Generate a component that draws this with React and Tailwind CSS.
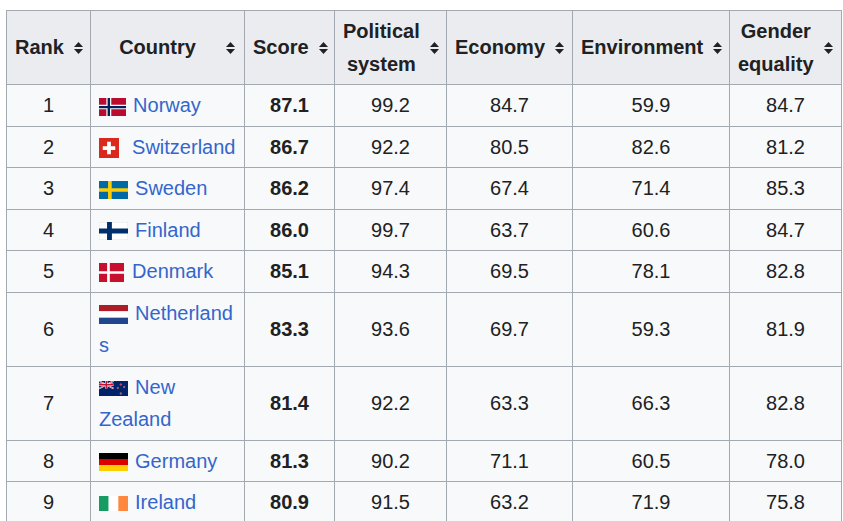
import React from 'react';

const SortIcon = () => (
  <svg width="9" height="12" viewBox="0 0 9 12" className="shrink-0 ml-[10px]">
    <path d="M4.5 0L9 5H0z" fill="#202122" />
    <path d="M0 7h9l-4.5 5z" fill="#202122" />
  </svg>
);

const Norway = () => (
  <svg width="27" height="18" viewBox="0 0 22 16" preserveAspectRatio="none" className="inline-block align-middle mr-[1.5px]">
    <rect width="22" height="16" fill="#ba0c2f" />
    <path d="M6 0h4v16H6zM0 6h22v4H0z" fill="#fff" />
    <path d="M7 0h2v16H7zM0 7h22v2H0z" fill="#00205b" />
  </svg>
);

const Switzerland = () => (
  <svg width="20" height="20" viewBox="0 0 32 32" className="inline-block align-middle mr-[7.5px]">
    <rect width="32" height="32" fill="#da291c" />
    <path d="M13 6h6v7h7v6h-7v7h-6v-7H6v-6h7z" fill="#fff" />
  </svg>
);

const Sweden = () => (
  <svg width="29" height="18" viewBox="0 0 16 10" preserveAspectRatio="none" className="inline-block align-middle mr-[1.5px]">
    <rect width="16" height="10" fill="#006aa7" />
    <path d="M5 0h2v10H5zM0 4h16v2H0z" fill="#fecc02" />
  </svg>
);

const Finland = () => (
  <svg width="29" height="18" viewBox="0 0 18 11" preserveAspectRatio="none" className="inline-block align-middle mr-[1.5px]">
    <rect width="18" height="11" fill="#fff" stroke="#d6d8db" strokeWidth="0.4" />
    <path d="M5 0h3v11H5zM0 4h18v3H0z" fill="#002f6c" />
  </svg>
);

const Denmark = () => (
  <svg width="25" height="19" viewBox="0 0 37 28" preserveAspectRatio="none" className="inline-block align-middle mr-[2.5px]">
    <rect width="37" height="28" fill="#c8102e" />
    <path d="M12 0h4v28h-4zM0 12h37v4H0z" fill="#fff" />
  </svg>
);

const Netherlands = () => (
  <svg width="29" height="19" viewBox="0 0 9 6" preserveAspectRatio="none" className="inline-block align-middle mr-[1.5px]">
    <rect width="9" height="2" fill="#ae1c28" />
    <rect y="2" width="9" height="2" fill="#fff" />
    <rect y="4" width="9" height="2" fill="#21468b" />
  </svg>
);

const NewZealand = () => (
  <svg width="29" height="15" viewBox="0 0 60 30" preserveAspectRatio="none" className="inline-block align-middle mr-[1.5px]">
    <rect width="60" height="30" fill="#012169" />
    <path d="M0 0L30 15M30 0L0 15" stroke="#fff" strokeWidth="3" />
    <path d="M0 0L30 15M30 0L0 15" stroke="#c8102e" strokeWidth="1.2" />
    <path d="M15 0v15M0 7.5h30" stroke="#fff" strokeWidth="5" />
    <path d="M15 0v15M0 7.5h30" stroke="#c8102e" strokeWidth="3" />
    <g fill="#c8102e" stroke="#fff" strokeWidth="0.6">
      <circle cx="45" cy="7" r="1.6" />
      <circle cx="39" cy="14" r="1.6" />
      <circle cx="52" cy="12" r="1.6" />
      <circle cx="45" cy="25" r="1.8" />
    </g>
  </svg>
);

const Germany = () => (
  <svg width="29" height="18" viewBox="0 0 5 3" preserveAspectRatio="none" className="inline-block align-middle mr-[1.5px]">
    <rect width="5" height="1" fill="#000" />
    <rect y="1" width="5" height="1" fill="#dd0000" />
    <rect y="2" width="5" height="1" fill="#ffce00" />
  </svg>
);

const Ireland = () => (
  <svg width="29" height="15" viewBox="0 0 3 2" preserveAspectRatio="none" className="inline-block align-middle mr-[1.5px]">
    <rect width="1" height="2" fill="#169b62" />
    <rect x="1" width="1" height="2" fill="#fff" />
    <rect x="2" width="1" height="2" fill="#ff883e" />
  </svg>
);

const rows = [
  { rank: 1, flag: Norway, country: 'Norway', score: '87.1', pol: '99.2', eco: '84.7', env: '59.9', gen: '84.7' },
  { rank: 2, flag: Switzerland, country: 'Switzerland', score: '86.7', pol: '92.2', eco: '80.5', env: '82.6', gen: '81.2' },
  { rank: 3, flag: Sweden, country: 'Sweden', score: '86.2', pol: '97.4', eco: '67.4', env: '71.4', gen: '85.3' },
  { rank: 4, flag: Finland, country: 'Finland', score: '86.0', pol: '99.7', eco: '63.7', env: '60.6', gen: '84.7' },
  { rank: 5, flag: Denmark, country: 'Denmark', score: '85.1', pol: '94.3', eco: '69.5', env: '78.1', gen: '82.8' },
  { rank: 6, flag: Netherlands, country: 'Netherlands', score: '83.3', pol: '93.6', eco: '69.7', env: '59.3', gen: '81.9' },
  { rank: 7, flag: NewZealand, country: 'New Zealand', score: '81.4', pol: '92.2', eco: '63.3', env: '66.3', gen: '82.8' },
  { rank: 8, flag: Germany, country: 'Germany', score: '81.3', pol: '90.2', eco: '71.1', env: '60.5', gen: '78.0' },
  { rank: 9, flag: Ireland, country: 'Ireland', score: '80.9', pol: '91.5', eco: '63.2', env: '71.9', gen: '75.8' },
];

const headers = ['Rank', 'Country', 'Score', 'Political system', 'Economy', 'Environment', 'Gender equality'];

const App = () => {
  return (
    <div className="bg-white min-h-screen pt-[10px] pl-[6px] font-['Liberation_Sans',Arial,sans-serif] text-[20px] leading-[32.5px] text-[#202122]">
      <table className="table-fixed w-[835px] border-collapse border border-[#a2a9b1] bg-[#f8f9fa]">
        <colgroup>
          <col className="w-[84px]" />
          <col className="w-[154px]" />
          <col className="w-[90px]" />
          <col className="w-[112px]" />
          <col className="w-[126px]" />
          <col className="w-[157px]" />
          <col className="w-[112px]" />
        </colgroup>
        <thead>
          <tr className="h-[74px]">
            {headers.map((h) => (
              <th key={h} className="bg-[#eaecf0] border border-[#a2a9b1] py-1 pl-2 pr-[9px] font-bold align-middle">
                <div className="flex items-center">
                  <span className="flex-1 text-center">{h}</span>
                  <SortIcon />
                </div>
              </th>
            ))}
          </tr>
        </thead>
        <tbody>
          {rows.map((r) => {
            const Flag = r.flag;
            // single-word names break inside the word, like the original page does
            const wrap = r.country.includes(' ') ? 'break-words' : 'break-all';
            return (
              <tr key={r.rank}>
                <td className="border border-[#a2a9b1] py-1 px-2 text-center">{r.rank}</td>
                <td className={`border border-[#a2a9b1] py-1 pl-2 pr-2 text-left ${wrap}`}>
                  <Flag />{'\u00A0'}<a href="#" className="text-[#3366cc]">{r.country}</a>
                </td>
                <td className="border border-[#a2a9b1] py-1 px-2 text-center font-bold">{r.score}</td>
                <td className="border border-[#a2a9b1] py-1 px-2 text-center">{r.pol}</td>
                <td className="border border-[#a2a9b1] py-1 px-2 text-center">{r.eco}</td>
                <td className="border border-[#a2a9b1] py-1 px-2 text-center">{r.env}</td>
                <td className="border border-[#a2a9b1] py-1 px-2 text-center">{r.gen}</td>
              </tr>
            );
          })}
        </tbody>
      </table>
    </div>
  );
};

export default App;
